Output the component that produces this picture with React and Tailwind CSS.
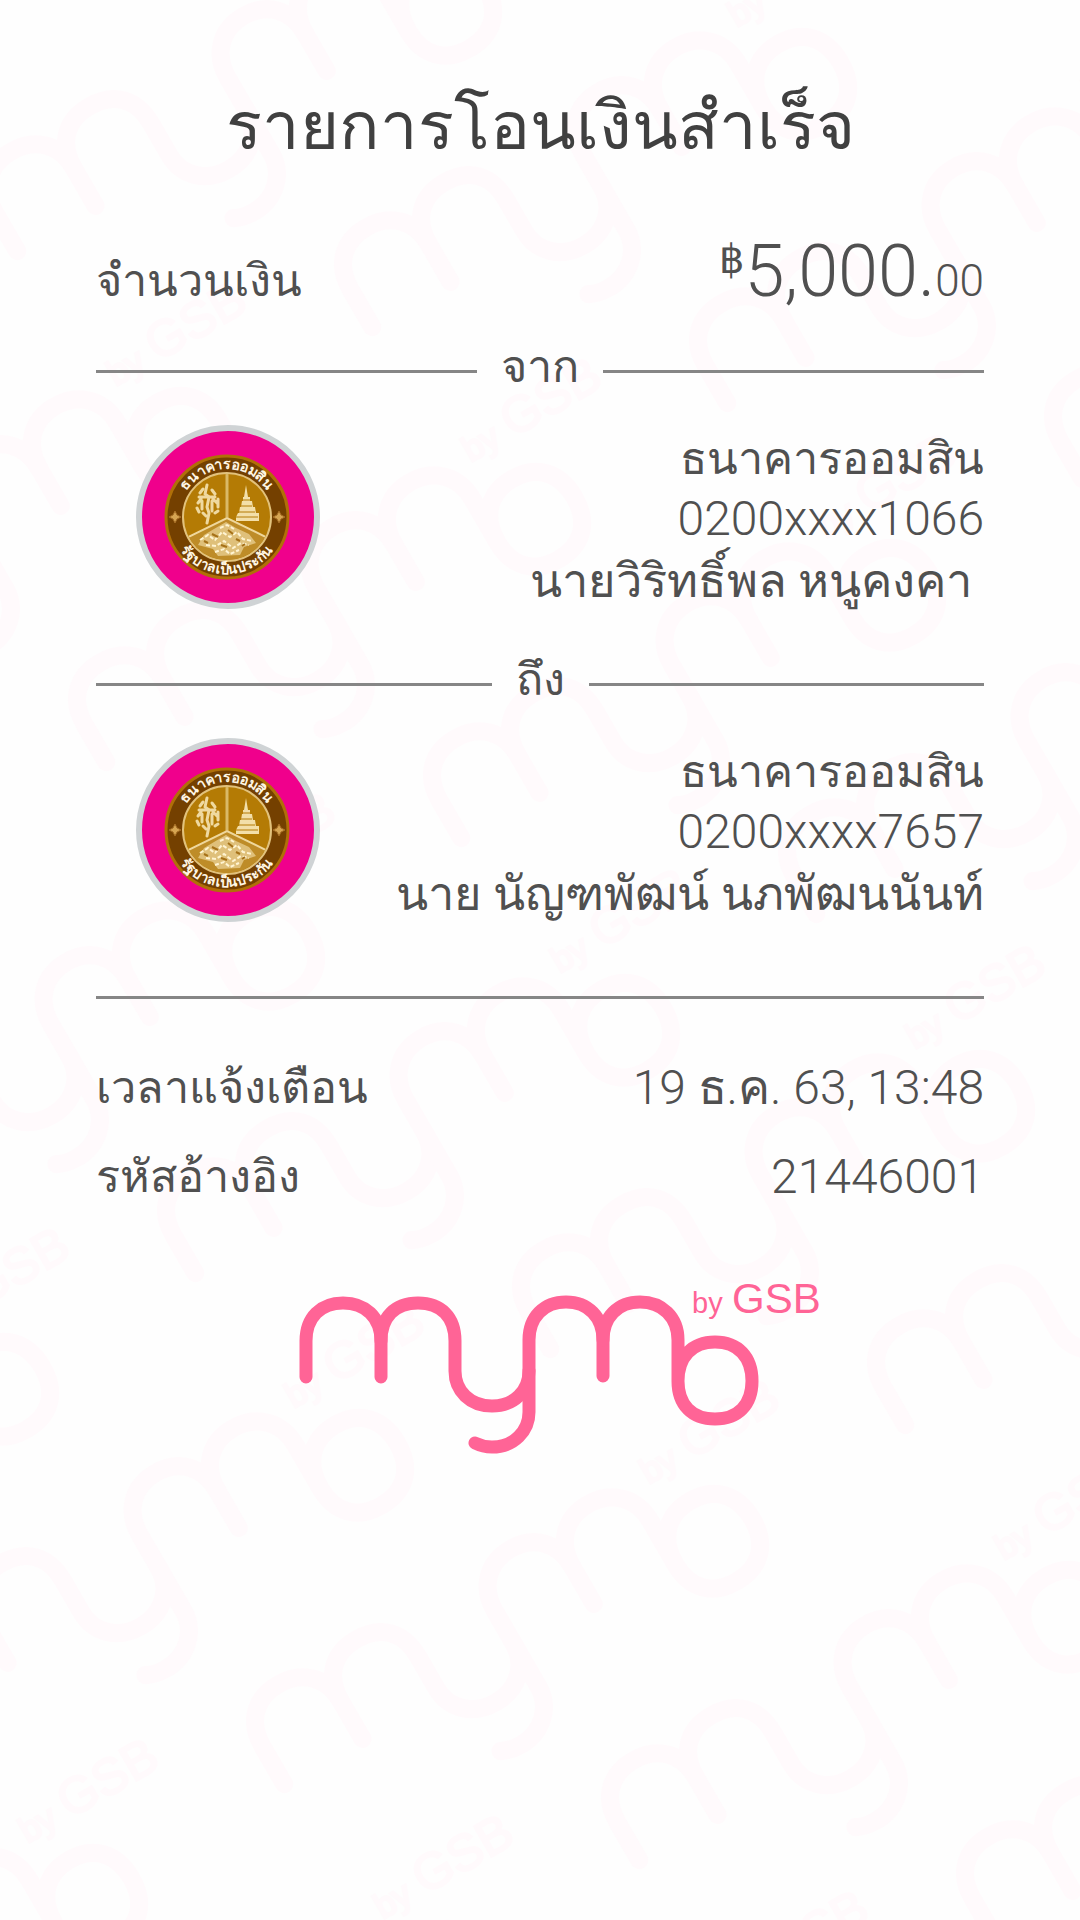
const STROKES = [
  'M306 1376V1340C306 1316 321 1302 343 1302S381 1316 381 1340V1376',
  'M381 1340C381 1316 395 1302 418 1302S455 1316 455 1340V1370C455 1390 470 1405 492 1405S529 1390 529 1370',
  'M475 1442Q483 1446 492 1446C514 1446 529 1430 529 1411V1339C529 1316 544 1301 566 1301S603 1316 603 1339V1375',
  'M603 1339C603 1316 618 1301 640 1301S678 1316 678 1339V1380C678 1404 692 1418 715 1418S752 1404 752 1380S738 1341 715 1341S678 1356 678 1380',
];

function LogoMark({ weight, textWeight }) {
  return (
    <g>
      <g fill="none" stroke="currentColor" strokeWidth={weight} strokeLinecap="round" strokeLinejoin="round">
        {STROKES.map((d) => (
          <path key={d} d={d} />
        ))}
      </g>
      <g fill="currentColor" stroke="currentColor" strokeWidth={textWeight} fontFamily="Liberation Sans, Arial, sans-serif">
        <text x="692" y="1312" fontSize="29">by</text>
        <text x="732" y="1312" fontSize="42">GSB</text>
      </g>
    </g>
  );
}

// First and last visible column of each row of the slanted grid.
const ROWS = [
  { row: -1, from: -1, to: 2 },
  { row: 0, from: -2, to: 2 },
  { row: 1, from: -2, to: 2 },
  { row: 2, from: -3, to: 1 },
  { row: 3, from: -3, to: 1 },
  { row: 4, from: -3, to: 0 },
];

const TILES = ROWS.flatMap(({ row, from, to }) =>
  Array.from({ length: to - from + 1 }, (_, i) => {
    const col = from + i;
    return { key: `${row}:${col}`, x: 371 + col * 355 + row * 89, y: 325 + col * 76 + row * 511 };
  })
);

function Watermark() {
  return (
    <svg aria-hidden="true" className="absolute inset-0 -z-10 h-full w-full text-[#fffafc]">
      {TILES.map((t) => (
        <g key={t.key} transform={`translate(${t.x} ${t.y}) rotate(-30) scale(1.206) translate(-306 -1374)`}>
          <LogoMark weight={15} textWeight={2} />
        </g>
      ))}
    </svg>
  );
}

function BankEmblem({ id }) {
  return (
    <div className="ml-10 size-46 shrink-0 rounded-full border-6 border-[#cfd3d5] bg-[#f0008c]">
      <svg viewBox="0 0 172 172" className="size-full" role="img" aria-label="ธนาคารออมสิน">
        <defs>
          <path id={`${id}-top`} d="M37 86A48 48 0 0 1 133 86" />
          <path id={`${id}-bottom`} d="M28 86A57 57 0 0 0 142 86" />
          <clipPath id={`${id}-disc`}>
            <circle cx="85" cy="86" r="43" />
          </clipPath>
        </defs>
        <circle cx="85" cy="86" r="61" fill="#744000" stroke="#b06f08" strokeWidth="3" />
        <circle cx="85" cy="86" r="44" fill="#b47b05" stroke="#e2c27c" strokeWidth="2" />
        <g clipPath={`url(#${id}-disc)`}>
          <path d="M85 42V88" stroke="#dab967" strokeWidth="3" />
          <path d="M85 86L38 110V132H132V110Z" fill="#be8c28" />
          <path d="M36 111L85 87L134 111" fill="none" stroke="#efd79c" strokeWidth="2" />
          <path d="M62 104L72 98L84 91L94 97L107 103L114 112L102 116L98 124L76 125L71 118L56 114Z" fill="#dfc07a" />
          <path d="M58 109L66 104L73 109L80 101L88 106L95 101L101 108L110 110M64 114L74 115L82 110L91 117L99 112L107 114M78 97L85 94L92 98M73 121L82 118L88 123L97 119" fill="none" stroke="#fff4d2" strokeWidth="2" strokeDasharray="4 2" />
          <path d="M70 103L76 106M86 99L91 103M79 114L85 116M94 108L98 110M62 110L66 112M100 115L103 113" stroke="#a67118" strokeWidth="2" />
        </g>
        <g fill="none" stroke="#efd9a0" strokeWidth="3" strokeLinecap="round" strokeLinejoin="round">
          <path d="M65 54L63 63L67 66L65 76L67 82L65 92" />
          <path d="M61 58L58 62M70 59L73 63M59 68L56 72M71 68L75 72M60 70V78M70 70V80M57 66H73M76 68V76M55 77L57 81M73 82L76 80M61 82L64 85" />
        </g>
        <path d="M104 54L106 66H108V70H110L111 76H113L114 82H117V90H94V86L96 82H97L98 76H99L100 70H101V66H102Z" fill="#f3dfa9" />
        <path d="M101 69H108M99 75H110M97 81H113M94 86H116" stroke="#b47b05" strokeWidth="1" />
        <path d="M33 80L35 84L39 86L35 88L33 92L31 88L27 86L31 84ZM137 80L139 84L143 86L139 88L137 92L135 88L131 86L135 84Z" fill="#d6a552" stroke="#a66d24" strokeWidth="1" />
        <g fill="#fff6e4" fontFamily="Liberation Sans, sans-serif" fontSize="14" fontWeight="700" textAnchor="middle">
          <text>
            <textPath href={`#${id}-top`} startOffset="50%">ธนาคารออมสิน</textPath>
          </text>
          <text>
            <textPath href={`#${id}-bottom`} startOffset="50%">รัฐบาลเป็นประกัน</textPath>
          </text>
        </g>
      </svg>
    </div>
  );
}

function Divider({ children }) {
  return (
    <div className="flex h-15 items-center gap-6">
      <span className="h-[3px] flex-1 bg-[#868686]" />
      <h2 className="pb-2 text-[45px] leading-[60px]">{children}</h2>
      <span className="h-[3px] flex-1 bg-[#868686]" />
    </div>
  );
}

function Party({ id, bank, account, name }) {
  return (
    <section className="flex h-[253px] items-start justify-between pt-6">
      <BankEmblem id={id} />
      <div className="flex flex-col items-end whitespace-pre pt-1 leading-[60px]">
        <p className="text-[45px]">{bank}</p>
        <p className="text-[48px] font-light">{account}</p>
        <p className="text-[47px] leading-[64px]">{name}</p>
      </div>
    </section>
  );
}

function DetailRow({ label, children }) {
  return (
    <div className="flex h-[89px] items-center justify-between">
      <dt className="text-[45px]">{label}</dt>
      <dd className="text-[48px] font-light">{children}</dd>
    </div>
  );
}

export default function App() {
  return (
    <main className="relative isolate min-h-screen overflow-hidden bg-[#fefefe] px-24 pt-20 font-[Roboto,sans-serif] text-[#505050]">
      <Watermark />
      <h1 className="text-center text-[67px] leading-[92px] text-[#404040]">รายการโอนเงินสำเร็จ</h1>
      <div className="mt-13 flex h-[117px] items-baseline justify-between">
        <p className="text-[45px] leading-[96px]">จำนวนเงิน</p>
        <p className="flex items-baseline font-light">
          <span className="self-start text-[40px] leading-[72px] font-normal">฿</span>
          <span className="text-[72px] leading-[96px]">5,000.</span>
          <span className="text-[44px]">00</span>
        </p>
      </div>
      <Divider>จาก</Divider>
      <Party id="from" bank="ธนาคารออมสิน" account="0200xxxx1066" name="นายวิริทธิ์พล หนูคงคา " />
      <Divider>ถึง</Divider>
      <Party id="to" bank="ธนาคารออมสิน" account="0200xxxx7657" name="นาย นัญฑพัฒน์ นภพัฒนนันท์" />
      <div className="flex h-15 items-center">
        <hr className="h-[3px] w-full border-0 bg-[#868686]" />
      </div>
      <dl className="pt-4">
        <DetailRow label="เวลาแจ้งเตือน">19 ธ.ค. 63, 13:48</DetailRow>
        <DetailRow label="รหัสอ้างอิง">21446001</DetailRow>
      </dl>
      <div className="flex justify-center pt-14 pl-10">
        <svg viewBox="296 1276 528 180" className="h-45 w-132 text-[#ff6496]" role="img" aria-label="mymo by GSB">
          <LogoMark weight={13} textWeight={0} />
        </svg>
      </div>
    </main>
  );
}
